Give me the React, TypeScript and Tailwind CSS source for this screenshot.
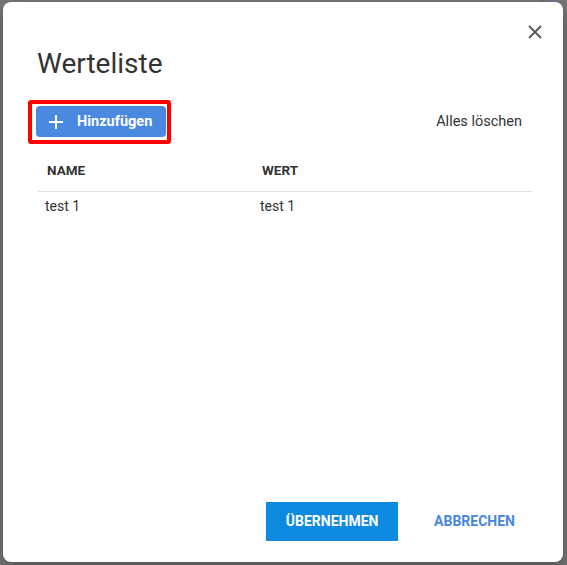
import React from 'react';

const rows = [{ name: 'test 1', value: 'test 1' }];

export default function App() {
  return (
    <div className="relative h-[565px] w-[567px] overflow-hidden bg-[#787878] pl-[3px] pt-[2px] font-['Roboto',sans-serif] text-[#333]">
      {/* bits of the page behind the backdrop */}
      <div className="absolute left-[542px] top-0 h-[6px] w-px bg-[#5e5e5e]" />
      <div className="absolute left-[549px] top-0 h-[4px] w-[6px] bg-[#6a7390]" />

      <div className="relative flex h-[560px] w-[560px] flex-col rounded-[8px] bg-white shadow-[0_6px_16px_rgba(0,0,0,0.35)]">
        <button className="absolute right-[20px] top-[22px] flex h-[16px] w-[16px] items-center justify-center text-[#555]">
          <svg width="16" height="16" viewBox="0 0 16 16" fill="none" stroke="currentColor" strokeWidth="1.8">
            <path d="M2 2 L14 14 M14 2 L2 14" />
          </svg>
        </button>

        <h1 className="ml-[34px] mt-[46px] text-[28px] leading-[32px] font-normal">Werteliste</h1>

        <div className="ml-[25px] mr-[41px] mt-[20px] flex items-center justify-between">
          <div className="rounded-[3px] border-4 border-[#ff0000] pb-[3px] pl-[4px] pr-[1px] pt-[2px]">
            <button className="flex h-[31px] w-[130px] items-center rounded-[4px] bg-[#4a89e0] pl-[13px] text-[14.5px] font-bold text-white">
              <svg width="14" height="14" viewBox="0 0 14 14" fill="none" stroke="currentColor" strokeWidth="2">
                <path d="M7 0 V14 M0 7 H14" />
              </svg>
              <span className="ml-[14px]">Hinzufügen</span>
            </button>
          </div>
          <button className="text-[14.5px] leading-[20px] text-[#333]">Alles löschen</button>
        </div>

        <div className="ml-[35px] mr-[31px] mt-[6px]">
          <div className="flex h-[42px] items-center border-b border-[#e0e0e0] text-[13.5px] font-bold">
            <div className="w-[215px] pl-[9px]">NAME</div>
            <div className="pl-[9px]">WERT</div>
          </div>
          {rows.map((r, i) => (
            <div key={i} className="flex h-[28px] items-center text-[14px]">
              <div className="w-[215px] pl-[7px]">{r.name}</div>
              <div className="pl-[7px]">{r.value}</div>
            </div>
          ))}
        </div>

        <div className="mt-auto mb-[21px] mr-[32px] flex items-center justify-end gap-[20px]">
          <button className="h-[39px] w-[132px] bg-[#0b8ae0] text-[14px] font-bold text-white">ÜBERNEHMEN</button>
          <button className="h-[39px] px-[16px] text-[14px] font-bold text-[#4a86e0]">ABBRECHEN</button>
        </div>
      </div>
    </div>
  );
}
